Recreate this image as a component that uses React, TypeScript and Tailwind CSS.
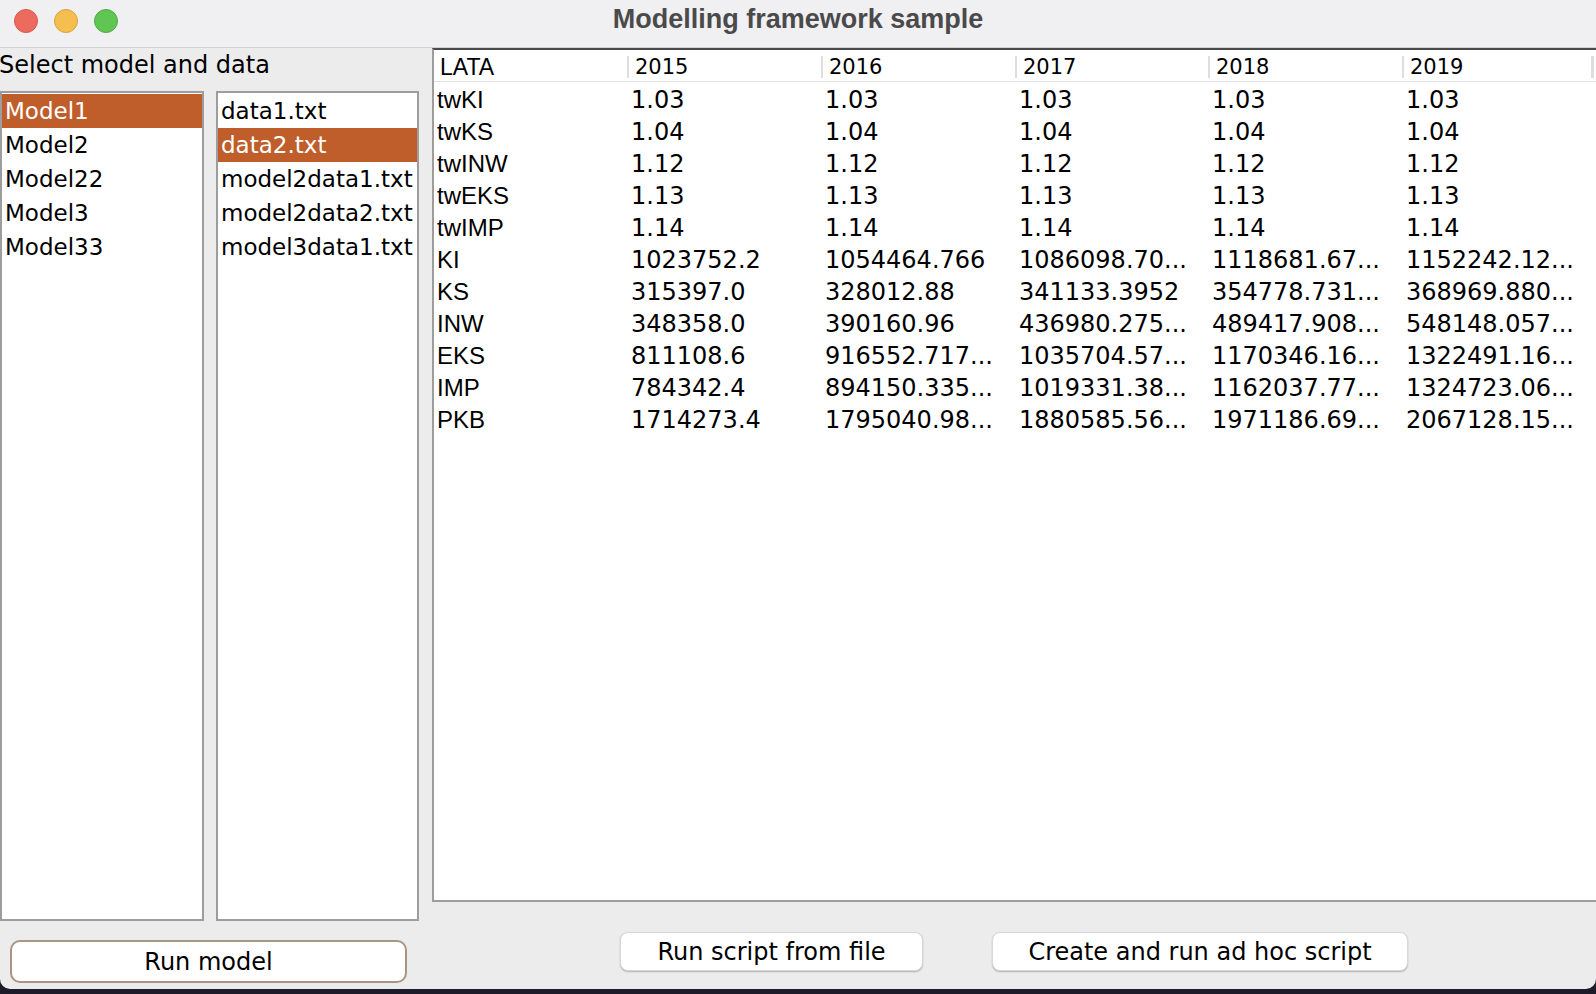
const models = ["Model1", "Model2", "Model22", "Model3", "Model33"]
const files = ["data1.txt", "data2.txt", "model2data1.txt", "model2data2.txt", "model3data1.txt"]

const years = ["2015", "2016", "2017", "2018", "2019"]

const rows: [string, string[]][] = [
  ["twKI", ["1.03", "1.03", "1.03", "1.03", "1.03"]],
  ["twKS", ["1.04", "1.04", "1.04", "1.04", "1.04"]],
  ["twINW", ["1.12", "1.12", "1.12", "1.12", "1.12"]],
  ["twEKS", ["1.13", "1.13", "1.13", "1.13", "1.13"]],
  ["twIMP", ["1.14", "1.14", "1.14", "1.14", "1.14"]],
  ["KI", ["1023752.2", "1054464.766", "1086098.70...", "1118681.67...", "1152242.12..."]],
  ["KS", ["315397.0", "328012.88", "341133.3952", "354778.731...", "368969.880..."]],
  ["INW", ["348358.0", "390160.96", "436980.275...", "489417.908...", "548148.057..."]],
  ["EKS", ["811108.6", "916552.717...", "1035704.57...", "1170346.16...", "1322491.16..."]],
  ["IMP", ["784342.4", "894150.335...", "1019331.38...", "1162037.77...", "1324723.06..."]],
  ["PKB", ["1714273.4", "1795040.98...", "1880585.56...", "1971186.69...", "2067128.15..."]],
]

const cols = "grid grid-cols-[193px_194px_194px_193px_194px_189px_1fr]"

function ListBox({ items, selected, width }: { items: string[]; selected: number; width: string }) {
  return (
    <div className={`${width} h-full bg-white border-2 border-[#9d9d9d] pt-px px-0`}>
      {items.map((item, i) => (
        <div
          key={item}
          className={`h-[34px] flex items-center pl-[3px] text-[23px] whitespace-nowrap ${
            i === selected ? "bg-[#bf5e2b] text-white" : "text-black"
          }`}
        >
          {item}
        </div>
      ))}
    </div>
  )
}

function TrafficLight({ color }: { color: string }) {
  return <div className={`w-[24px] h-[24px] rounded-full border ${color}`} />
}

export default function App() {
  return (
    <div className="w-[1596px] h-[994px] bg-[#1d1b29] overflow-hidden" style={{ fontFamily: '"DejaVu Sans", sans-serif' }}>
      <div className="h-[989px] bg-[#ececec] rounded-b-[10px] flex flex-col overflow-hidden">
        {/* title bar */}
        <div className="relative h-[48px] shrink-0 bg-[#f0eff2] border-b border-[#d3d3d3] flex items-center pl-[14px] pb-[6px] gap-[16px]">
          <TrafficLight color="bg-[#ed6a5e] border-[#d8574b]" />
          <TrafficLight color="bg-[#f5bf4f] border-[#d9a33e]" />
          <TrafficLight color="bg-[#61c554] border-[#4fab43]" />
          <div
            className="absolute inset-0 pb-[9px] flex items-center justify-center text-[27px] font-bold text-[#4a4a4a]"
            style={{ fontFamily: '"Liberation Sans", Arial, sans-serif' }}
          >
            Modelling framework sample
          </div>
        </div>

        <div className="flex flex-1 min-h-0">
          {/* left side */}
          <div className="w-[419px] shrink-0 flex flex-col">
            <div className="h-[34px] mb-[9px] flex items-center text-[24px] text-black whitespace-nowrap -ml-px">Select model and data</div>
            <div className="h-[830px] flex gap-[12px]">
              <ListBox items={models} selected={0} width="w-[204px]" />
              <ListBox items={files} selected={1} width="w-[203px]" />
            </div>
            <div className="pt-[19px] pl-[10px] pr-[12px]">
              <button className="w-[397px] h-[43px] bg-white border-2 border-[#a89583] rounded-[10px] text-[24px] text-black flex items-center justify-center">
                Run model
              </button>
            </div>
          </div>

          {/* right side */}
          <div className="flex-1 ml-[13px] flex flex-col">
            <div className="h-[854px] bg-white border-l-2 border-t-2 border-b-2 border-l-[#9d9d9d] border-t-[#4a4a4a] border-b-[#9d9d9d]">
              <div className={`${cols} h-[32px] border-b border-[#e2e2e2]`}>
                <div className="flex items-center pl-[6px] text-[23px] text-black" style={{ fontFamily: '"Liberation Sans", Arial, sans-serif' }}>
                  LATA
                </div>
                {years.map((y) => (
                  <div key={y} className="flex items-center">
                    <span className="w-[2px] h-[22px] bg-[#dedede]" />
                    <span className="ml-[6px] text-[21px] text-black">{y}</span>
                  </div>
                ))}
                <div className="flex items-center">
                  <span className="w-[3px] h-[22px] bg-[#dedede]" />
                </div>
              </div>
              {rows.map(([label, vals]) => (
                <div key={label} className={`${cols} h-[32px]`}>
                  <div className="flex items-center pl-[3px] text-[24px] text-black" style={{ fontFamily: '"Liberation Sans", Arial, sans-serif' }}>
                    {label}
                  </div>
                  {vals.map((v, i) => (
                    <div key={i} className="flex items-center pl-[4px] text-[24px] text-black whitespace-nowrap overflow-hidden">
                      {v}
                    </div>
                  ))}
                  <div />
                </div>
              ))}
            </div>
            <div className="flex justify-center gap-[69px] pt-[30px]">
              <button className="w-[303px] h-[39px] bg-white rounded-[8px] border border-[#d8d8d8] shadow-[0_1px_1.5px_rgba(0,0,0,0.25)] text-[24px] text-black flex items-center justify-center">
                Run script from file
              </button>
              <button className="w-[416px] h-[39px] bg-white rounded-[8px] border border-[#d8d8d8] shadow-[0_1px_1.5px_rgba(0,0,0,0.25)] text-[24px] text-black flex items-center justify-center">
                Create and run ad hoc script
              </button>
            </div>
          </div>
        </div>
      </div>
    </div>
  )
}
